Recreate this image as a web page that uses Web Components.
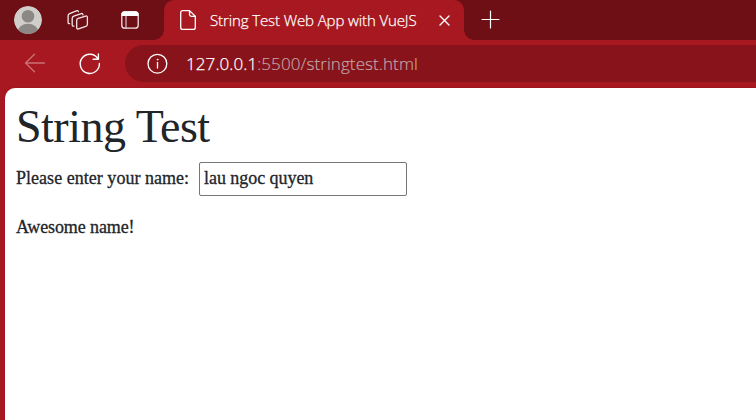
<!DOCTYPE html>
<html lang="en"><head><meta charset="utf-8"><title>String Test Web App with VueJS</title>
<style>html,body{margin:0;width:756px;height:420px;overflow:hidden}</style></head>
<body>
<browser-window>
 <tab-strip slot="tabs"><browser-tab>String Test Web App with VueJS</browser-tab></tab-strip>
 <address-toolbar slot="toolbar"><span slot="host">127.0.0.1</span><span slot="path">:5500/stringtest.html</span></address-toolbar>
 <string-test name="lau ngoc quyen"><span slot="title">String Test</span><span slot="label">Please enter your name:</span><span slot="message">Awesome name!</span></string-test>
</browser-window>
<script>
const define=(name,html,init)=>customElements.define(name,class extends HTMLElement{
  constructor(){super();this.attachShadow({mode:'open'}).innerHTML=html;}
  connectedCallback(){if(init)init(this);}
});
define('browser-window',`<style>
:host{display:flex;flex-direction:column;width:756px;height:420px;background:#a81820;overflow:hidden}
main{flex:1;margin-left:5px;background:#fff;border-radius:10px 0 0 0;box-shadow:0 0 2px #78101780}
</style><slot name="tabs"></slot><slot name="toolbar"></slot><main><slot></slot></main>`);
define('tab-strip',`<style>
:host{display:flex;height:40px;background:#6e0f15;flex:none}
.tools{display:flex;width:164px;height:40px;flex:none}
svg{display:block;fill:none;stroke:#f4e6e7;stroke-width:1.3;stroke-linejoin:round;stroke-linecap:round}
</style><div class="tools"><svg width="164" height="40" viewBox="0 0 164 40">
<defs><clipPath id="c"><circle cx="28" cy="20" r="14"/></clipPath></defs>
<g stroke="none" clip-path="url(#c)"><circle cx="28" cy="20" r="14" fill="#d0cecb"/><circle cx="28" cy="16.3" r="6.3" fill="#8b8885"/><ellipse cx="28" cy="32" rx="10.3" ry="8.2" fill="#8b8885"/></g>
<path d="M78.2 18.4q-1.5.5-1.5 1.8v7.2q0 2 1.8 1.5l7.3-2.5q1.6-.6 1.6-2.1v-6.8q0-2-1.8-1.4zM73.9 26.1q-1.7.4-1.7-1.3v-6.3q0-1.7 1.6-2.3l7.5-2.6q1.5-.4 1.7 1.3M69.6 23.7q-1.5.2-1.5-1.4V16q0-1.7 1.5-2.3l6.8-2.9q1.5-.6 2 .8"/>
<rect x="121.8" y="11.8" width="16.4" height="16.4" rx="3"/><path d="M122 15.3v-.8q0-2.7 2.8-2.7h10.4q2.8 0 2.8 2.7v.8z" fill="#fff" stroke="#fff"/><path d="M126 16v12" stroke-width="1"/>
</svg></div><slot></slot><svg width="50" height="40" viewBox="0 0 50 40"><path d="M18 19.5h17M26.5 11v17" stroke="#fff" stroke-width="1.2"/></svg>`);
define('browser-tab',`<style>
:host{display:flex;align-items:center;box-sizing:border-box;position:relative;width:300px;height:40px;background:#a81820;border-radius:10px 10px 0 0;padding-left:15px;color:#fff;font:300 15px/20px "Open Sans","Noto Sans",sans-serif}
:host:before,:host:after{content:"";position:absolute;bottom:0;width:10px;height:10px}
:host:before{left:-10px;background:radial-gradient(circle at 0 0,transparent 9.5px,#a81820 10px)}
:host:after{right:-10px;background:radial-gradient(circle at 100% 0,transparent 9.5px,#a81820 10px)}
svg{fill:none;stroke:#fff;stroke-width:1.3;stroke-linejoin:round;stroke-linecap:round;flex:none}
.t{width:208px;margin-left:11px;margin-right:16px;white-space:nowrap;letter-spacing:-.11px;-webkit-text-stroke:.25px}
</style><svg width="20" height="40" viewBox="0 0 20 40"><path d="M10.5 10.6H3.7q-2 0-2 2v14.8q0 2 2 2h10.6q2 0 2-2V16.2l-5.8-5.6v4q0 1.8 1.8 1.8h4"/></svg>
<span class="t"><slot></slot></span><svg width="24" height="40" viewBox="0 0 24 40"><path d="m6 16 9 9m0-9-9 9" stroke-width="1.4"/></svg>`);
define('address-toolbar',`<style>
:host{display:flex;height:48px;flex:none;font:300 17px/24px "Open Sans","Noto Sans",sans-serif}
svg{display:block;fill:none;stroke:#fff;stroke-width:1.4;stroke-linecap:round;stroke-linejoin:round;flex:none}
.bar{display:flex;align-items:center;box-sizing:border-box;flex:1;height:37px;margin-top:5px;border-radius:19px 0 0 19px;background:#88131a;padding-left:20px;white-space:nowrap}
.text{margin-left:16px;color:#c0a9aa;letter-spacing:.09px;-webkit-text-stroke:.15px}.h{color:#fff;-webkit-text-stroke:.25px}
</style><svg width="125" height="48" viewBox="0 40 125 48"><path d="M44.5 63H25.5m9-8.8L25.5 63l9 8.8" stroke="#ca7177" stroke-width="1.3"/><path d="M97.8 58.5A9.6 9.6 0 1 0 99.4 63.5M98.4 53.9v5.3h-5.3"/></svg>
<div class="bar"><svg width="25" height="37" viewBox="145 45 25 37"><circle cx="157.4" cy="63.7" r="9.4" stroke-width="1.3"/><path d="M157.5 62.5v5.5" stroke-width="1.3"/><circle cx="157.5" cy="59.6" r=".5" stroke-width=".8" fill="#fff"/></svg><span class="text"><span class="h"><slot name="host"></slot></span><slot name="path"></slot></span></div>`);
define('string-test',`<style>
:host{display:flex;flex-direction:column;padding:11px 11px;color:#212529;font:18px/24px "Liberation Serif",serif;-webkit-text-stroke:.3px}
h1{font-weight:400;font-size:46px;line-height:56px;margin:0 0 7px;-webkit-text-stroke:0;white-space:nowrap;letter-spacing:-.5px}
.row{display:flex;height:34px;line-height:32px}
label{width:183px;white-space:nowrap;letter-spacing:.03px}
input{box-sizing:border-box;width:208px;height:34px;margin:0;padding:0 4px 2px;border:1px solid #767676;border-radius:2px;outline:0;background:#fff;font:inherit;color:inherit;-webkit-text-stroke:inherit;letter-spacing:-.05px}
p{margin:19px 0 0;letter-spacing:-.1px}
</style><h1><slot name="title"></slot></h1><div class="row"><label for="n"><slot name="label"></slot></label><input id="n" type="text"></div><p><slot name="message"></slot></p>`,el=>{el.shadowRoot.querySelector('input').value=el.getAttribute('name')});
</script></body></html>
